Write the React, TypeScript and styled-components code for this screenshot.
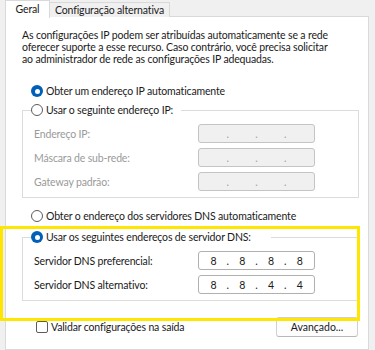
import React from "react";
import styled, { createGlobalStyle } from "styled-components";

const GlobalStyle = createGlobalStyle`
  html, body {
    margin: 0;
    padding: 0;
  }
  body {
    background: #f0f0f0;
    font-family: Lato, "Noto Sans", sans-serif;
    font-size: 10.5px;
    letter-spacing: -0.15px;
    color: #1a1a1a;
  }
`;

const Window = styled.div`
  position: relative;
  width: 375px;
  height: 350px;
  overflow: hidden;
  box-sizing: border-box;
  padding: 0 6px 0 5px;
  display: flex;
  flex-direction: column;
`;

const TabBar = styled.div`
  display: flex;
  align-items: flex-end;
  height: 17px;
  position: relative;
  z-index: 2;
`;

const Tab = styled.div<{ $active?: boolean }>`
  box-sizing: border-box;
  display: flex;
  align-items: center;
  justify-content: center;
  line-height: 12px;
  border: 1px solid #d9d9d9;
  ${(p) =>
    p.$active
      ? `
    width: 45px;
    height: 18px;
    margin-bottom: -1px;
    background: #fff;
    border-bottom: none;
    padding-bottom: 2px;
  `
      : `
    height: 15px;
    padding: 0 5px;
    background: #f0f0f0;
    border-left: none;
    border-bottom: none;
  `}
`;

const Panel = styled.div`
  flex: 1;
  margin-top: -1px;
  background: #fff;
  border: 1px solid #d9d9d9;
  padding: 12px 9px 0 16px;
`;

const Intro = styled.p`
  margin: 0;
  line-height: 12px;
  white-space: nowrap;
`;

const RadioRow = styled.div<{ $top?: number }>`
  display: flex;
  align-items: center;
  gap: 3px;
  height: 14px;
  margin: ${(p) => p.$top ?? 0}px 0 0 9px;
`;

const Radio = styled.span<{ $checked?: boolean }>`
  box-sizing: border-box;
  width: 12px;
  height: 12px;
  border-radius: 50%;
  flex-shrink: 0;
  display: flex;
  align-items: center;
  justify-content: center;
  ${(p) =>
    p.$checked
      ? `
    background: #005fb8;
    &::after {
      content: "";
      width: 5px;
      height: 5px;
      border-radius: 50%;
      background: #fff;
    }
  `
      : `
    background: #fff;
    border: 1px solid #5c5c5c;
  `}
`;

const Group = styled.fieldset<{ $top: number }>`
  margin: ${(p) => p.$top}px 0 0;
  padding: 7px 0 6px 11px;
  border: 1px solid #dcdcdc;
  display: flex;
  flex-direction: column;
  gap: 5px;
`;

const GroupLegend = styled.legend<{ $gap: number }>`
  padding: 0 ${(p) => p.$gap}px 0 0;
  margin-left: -3px;
  display: flex;
  align-items: center;
  gap: 3px;
  height: 14px;
  background: #fff;
`;

const FieldRow = styled.div`
  display: grid;
  grid-template-columns: 164px 117px;
  align-items: center;
  height: 19px;
`;

const FieldLabel = styled.span<{ $disabled?: boolean }>`
  color: ${(p) => (p.$disabled ? "#9a9a9a" : "#1a1a1a")};
`;

const IpBox = styled.div<{ $disabled?: boolean }>`
  box-sizing: border-box;
  height: 19px;
  display: flex;
  align-items: center;
  border: 1px solid ${(p) => (p.$disabled ? "#c4c4c4" : "#b0b0b0")};
  border-radius: 3px;
  background: ${(p) => (p.$disabled ? "#f0f0f0" : "#fff")};
  color: ${(p) => (p.$disabled ? "#a0a0a0" : "#1a1a1a")};
`;

const Octet = styled.span`
  flex: 1;
  text-align: center;
`;

const Dot = styled.span`
  width: 0;
  display: flex;
  justify-content: center;
`;

const BottomRow = styled.div`
  display: flex;
  align-items: center;
  justify-content: space-between;
  margin-top: 16px;
  padding-right: 1px;
`;

const CheckLabel = styled.label`
  display: flex;
  align-items: center;
  gap: 3px;
  margin-left: 14px;
`;

const CheckBox = styled.span`
  box-sizing: border-box;
  width: 12px;
  height: 12px;
  border: 1px solid #5c5c5c;
  border-radius: 2px;
  background: #fff;
`;

const Button = styled.button`
  box-sizing: border-box;
  width: 82px;
  height: 20px;
  padding: 0;
  font: inherit;
  color: #1a1a1a;
  background: #fdfdfd;
  border: 1px solid #d0d0d0;
  border-bottom-color: #b8b8b8;
  border-radius: 3px;
`;

const Highlight = styled.div`
  position: absolute;
  left: 0;
  top: 226px;
  width: 360px;
  height: 95px;
  box-sizing: border-box;
  border: 3px solid #ffe600;
  pointer-events: none;
`;

const IpField = ({ value, disabled }: { value?: string[]; disabled?: boolean }) => {
  const parts = value ?? ["", "", "", ""];
  return (
    <IpBox $disabled={disabled}>
      {parts.map((part, i) => (
        <React.Fragment key={i}>
          {i > 0 && <Dot>.</Dot>}
          <Octet>{part}</Octet>
        </React.Fragment>
      ))}
    </IpBox>
  );
};

export default function App() {
  return (
    <>
      <GlobalStyle />
      <Window>
        <TabBar>
          <Tab $active>Geral</Tab>
          <Tab>Configuração alternativa</Tab>
        </TabBar>
        <Panel>
          <Intro>
            As configurações IP podem ser atribuídas automaticamente se a rede
            <br />
            oferecer suporte a esse recurso. Caso contrário, você precisa solicitar
            <br />
            ao administrador de rede as configurações IP adequadas.
          </Intro>

          <RadioRow $top={19}>
            <Radio $checked />
            Obter um endereço IP automaticamente
          </RadioRow>

          <Group $top={5}>
            <GroupLegend $gap={8}>
              <Radio />
              Usar o seguinte endereço IP:
            </GroupLegend>
            <FieldRow>
              <FieldLabel $disabled>Endereço IP:</FieldLabel>
              <IpField disabled />
            </FieldRow>
            <FieldRow>
              <FieldLabel $disabled>Máscara de sub-rede:</FieldLabel>
              <IpField disabled />
            </FieldRow>
            <FieldRow>
              <FieldLabel $disabled>Gateway padrão:</FieldLabel>
              <IpField disabled />
            </FieldRow>
          </Group>

          <RadioRow $top={11}>
            <Radio />
            Obter o endereço dos servidores DNS automaticamente
          </RadioRow>

          <Group $top={7}>
            <GroupLegend $gap={20}>
              <Radio $checked />
              Usar os seguintes endereços de servidor DNS:
            </GroupLegend>
            <FieldRow>
              <FieldLabel>Servidor DNS preferencial:</FieldLabel>
              <IpField value={["8", "8", "8", "8"]} />
            </FieldRow>
            <FieldRow>
              <FieldLabel>Servidor DNS alternativo:</FieldLabel>
              <IpField value={["8", "8", "4", "4"]} />
            </FieldRow>
          </Group>

          <BottomRow>
            <CheckLabel>
              <CheckBox />
              Validar configurações na saída
            </CheckLabel>
            <Button>Avançado...</Button>
          </BottomRow>
        </Panel>
        <Highlight />
      </Window>
    </>
  );
}
